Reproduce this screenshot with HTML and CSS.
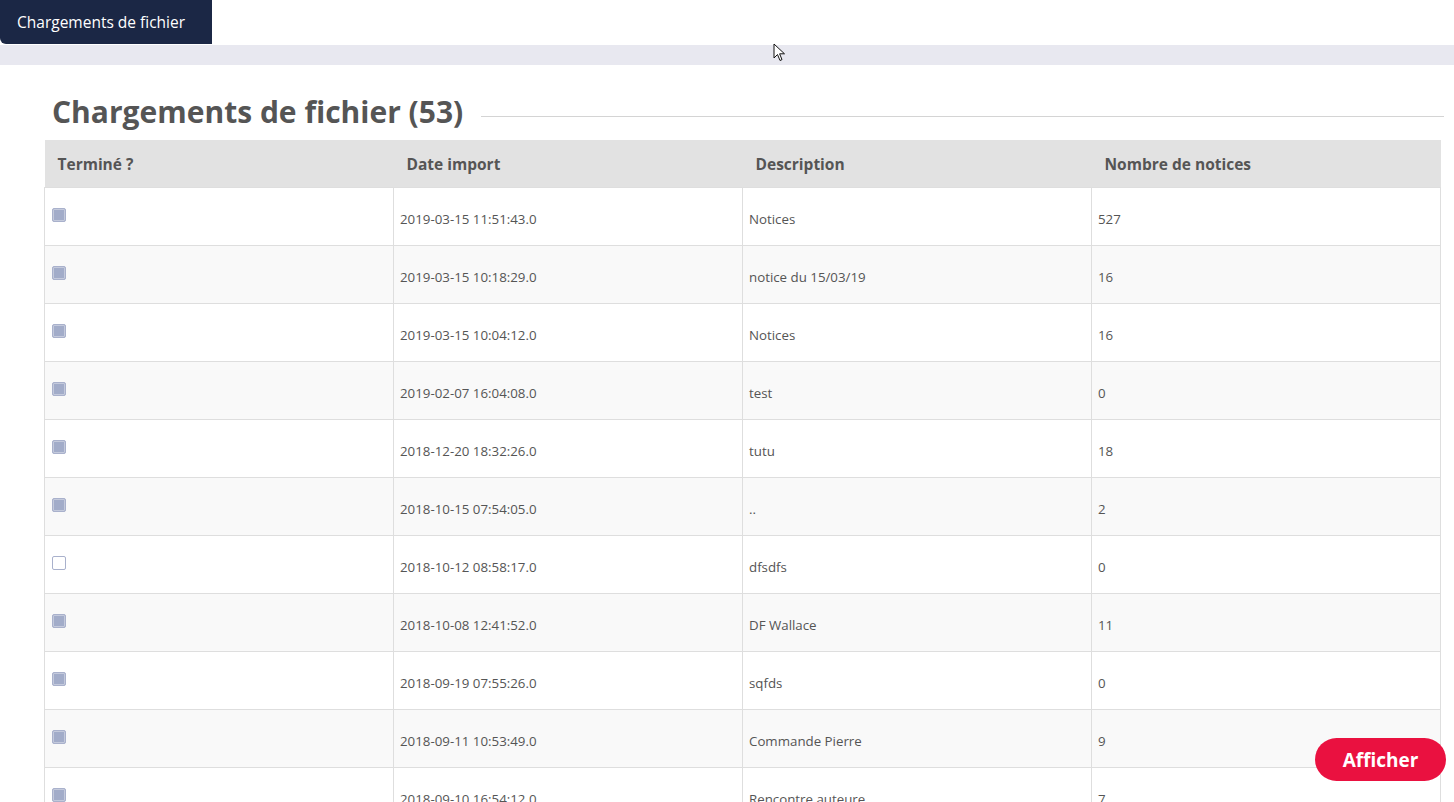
FILE: index.html
```html
<!DOCTYPE html>
<html lang="fr">
<head>
  <meta charset="UTF-8" />
  <title>Chargements de fichier</title>
  <link rel="stylesheet" href="styles.css">
</head>
<body>

<header class="topbar">
  <div class="tab">Chargements de fichier</div>
</header>
<div class="band"></div>

<main class="content">
  <h1 class="title">Chargements de fichier (53)</h1>

  <table class="grid">
    <thead>
      <tr>
        <th>Terminé ?</th>
        <th>Date import</th>
        <th>Description</th>
        <th>Nombre de notices</th>
      </tr>
    </thead>
    <tbody>
      <tr><td><input type="checkbox" checked disabled></td><td>2019-03-15 11:51:43.0</td><td>Notices</td><td>527</td></tr>
      <tr><td><input type="checkbox" checked disabled></td><td>2019-03-15 10:18:29.0</td><td>notice du 15/03/19</td><td>16</td></tr>
      <tr><td><input type="checkbox" checked disabled></td><td>2019-03-15 10:04:12.0</td><td>Notices</td><td>16</td></tr>
      <tr><td><input type="checkbox" checked disabled></td><td>2019-02-07 16:04:08.0</td><td>test</td><td>0</td></tr>
      <tr><td><input type="checkbox" checked disabled></td><td>2018-12-20 18:32:26.0</td><td>tutu</td><td>18</td></tr>
      <tr><td><input type="checkbox" checked disabled></td><td>2018-10-15 07:54:05.0</td><td>..</td><td>2</td></tr>
      <tr><td><input type="checkbox" disabled></td><td>2018-10-12 08:58:17.0</td><td>dfsdfs</td><td>0</td></tr>
      <tr><td><input type="checkbox" checked disabled></td><td>2018-10-08 12:41:52.0</td><td>DF Wallace</td><td>11</td></tr>
      <tr><td><input type="checkbox" checked disabled></td><td>2018-09-19 07:55:26.0</td><td>sqfds</td><td>0</td></tr>
      <tr><td><input type="checkbox" checked disabled></td><td>2018-09-11 10:53:49.0</td><td>Commande Pierre</td><td>9</td></tr>
      <tr><td><input type="checkbox" checked disabled></td><td>2018-09-10 16:54:12.0</td><td>Rencontre auteure</td><td>7</td></tr>
    </tbody>
  </table>
</main>

<button class="show-btn">Afficher</button>

<svg class="cursor" width="14" height="20" viewBox="0 0 14 20">
  <path d="M1 1 L1 15 L4.5 11.5 L7 17.5 L9 16.6 L6.6 10.8 L11.5 10.8 Z" fill="#fff" stroke="#111" stroke-width="1"/>
</svg>

</body>
</html>
```

FILE: styles.css
```css
html, body {
  margin: 0;
  padding: 0;
  background: #fff;
  font-family: "Open Sans", "Liberation Sans", sans-serif;
  color: #555;
  overflow: hidden;
}
.topbar {
  height: 45px;
  background: #fff;
}
.tab {
  display: inline-block;
  width: 212px;
  height: 44px;
  box-sizing: border-box;
  padding: 0 0 0 17px;
  line-height: 44px;
  background: #1b2745;
  color: #fff;
  font-size: 15.5px;
  border-bottom-left-radius: 6px;
}
.band {
  height: 20px;
  background: #e8e8f0;
}
.content {
  background: #fff;
  border-top-left-radius: 8px;
  padding: 22px 10px 0 44px;
}
.title {
  display: flex;
  align-items: center;
  margin: 0 0 3px 8px;
  font-size: 30px;
  font-weight: 700;
  color: #555;
  line-height: 50px;
}
.title::after {
  content: "";
  flex: 1;
  height: 1px;
  margin: 8px 0 0 18px;
  background: #d4d4d4;
}
.grid {
  width: 1397px;
  border-collapse: collapse;
  table-layout: fixed;
  font-size: 13.3px;
}
.grid th {
  background: #e2e2e2;
  text-align: left;
  font-weight: 700;
  font-size: 15.5px;
  height: 47px;
  padding: 0 13px;
  color: #555;
}
.grid td {
  border: 1px solid #dedede;
  padding: 20px 6px 17px;
  line-height: 20px;
  vertical-align: top;
  color: #555;
}
.grid td:first-child {
  padding-left: 7px;
}
.grid tbody tr:nth-child(even) td {
  background: #f9f9f9;
}
.grid input {
  appearance: none;
  width: 14px;
  height: 14px;
  margin: 0;
  vertical-align: top;
  border: 1px solid #a9b1cc;
  border-radius: 2px;
  background: #fff;
}
.grid input:checked {
  background: #a2acc9;
  box-shadow: inset 0 0 0 1px #c4cadc;
}
.grid td + td {
  padding-top: 21px;
  padding-bottom: 16px;
}
.show-btn {
  position: fixed;
  right: 8px;
  bottom: 21px;
  width: 131px;
  height: 43px;
  border: none;
  border-radius: 22px;
  background: #ea1140;
  color: #fff;
  font-family: "Open Sans", sans-serif;
  font-weight: 700;
  font-size: 19px;
}
.cursor {
  position: fixed;
  left: 773px;
  top: 43px;
}
```
